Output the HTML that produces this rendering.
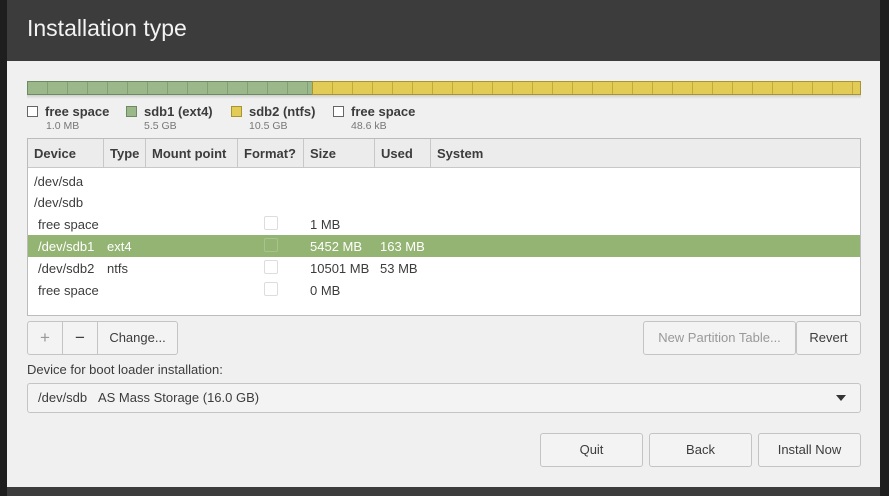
<!DOCTYPE html>
<html><head><style>
*{margin:0;padding:0;box-sizing:border-box}
body{width:889px;height:496px;background:#1e1e1e;position:relative;overflow:hidden;font-family:"Liberation Sans","DejaVu Sans",sans-serif;font-size:13px;color:#3c3c3c}
.a{position:absolute}
#win{left:7px;top:0;width:873px;height:496px;background:#f0f0f0}
#hdr{left:7px;top:0;width:873px;height:61px;background:#3c3c3c;color:#f3f3f3;font-size:23px;padding:15px 0 0 20px}
#bot{left:7px;top:487px;width:873px;height:9px;background:#3c3c3c}
.bar{top:81px;height:14px;border:1px solid #888}
.g{left:27px;width:286px;background:repeating-linear-gradient(90deg,#9ab88a 0 19px,#839f74 19px 20px);border-color:#6f8a62}
.y{left:312px;width:549px;background:repeating-linear-gradient(90deg,#e2cb56 0 19px,#c3ab3a 19px 20px);border-color:#a99530}
.sh{top:95px;height:4px;left:27px;width:834px;background:linear-gradient(#cfcfcf,#f0f0f0)}
.lg{top:104px;font-weight:bold;font-size:13px}
.sw{width:11px;height:11px;border:1px solid #666;display:inline-block;vertical-align:-1px;margin-right:7px}
.sub{top:120px;font-size:10.5px;color:#777}
#tbl{left:27px;top:138px;width:834px;height:178px;background:#fff;border:1px solid #bbb}
#th{left:0;top:0;width:832px;height:29px;background:#ececec;border-bottom:1px solid #c8c8c8}
.c{top:0;height:28px;border-right:1px solid #c8c8c8;font-weight:bold;padding:7px 0 0 6px}
.r{left:0;width:832px;height:22px;padding-top:4px}
.sel{background:#94b473;color:#fff}
.cb{width:14px;height:14px;border:1px solid #ddd;border-radius:2px;background:#fff}
.btn{height:34px;border:1px solid #c4c4c4;border-radius:3px;background:#f3f3f3;text-align:center;line-height:32px}
</style></head><body>
<div id="win" class="a"></div>
<div id="hdr" class="a">Installation type</div>
<div id="bot" class="a"></div>
<div class="a bar g"></div><div class="a bar y"></div><div class="a sh"></div>
<div class="a lg" style="left:27px"><span class="sw" style="background:#fff"></span>free space</div>
<div class="a lg" style="left:126px"><span class="sw" style="background:#9ab88a;border-color:#6f8a62"></span>sdb1 (ext4)</div>
<div class="a lg" style="left:231px"><span class="sw" style="background:#e2cb56;border-color:#a99530"></span>sdb2 (ntfs)</div>
<div class="a lg" style="left:333px"><span class="sw" style="background:#fff"></span>free space</div>
<div class="a sub" style="left:46px">1.0 MB</div>
<div class="a sub" style="left:144px">5.5 GB</div>
<div class="a sub" style="left:249px">10.5 GB</div>
<div class="a sub" style="left:351px">48.6 kB</div>
<div id="tbl" class="a">
<div id="th" class="a">
<div class="a c" style="left:0;width:76px">Device</div>
<div class="a c" style="left:76px;width:42px">Type</div>
<div class="a c" style="left:118px;width:92px">Mount point</div>
<div class="a c" style="left:210px;width:66px">Format?</div>
<div class="a c" style="left:276px;width:71px">Size</div>
<div class="a c" style="left:347px;width:56px">Used</div>
<div class="a c" style="left:403px;width:429px;border:0">System</div>
</div>
<div class="a r" style="top:31px"><span class="a" style="left:6px">/dev/sda</span></div>
<div class="a r" style="top:52px"><span class="a" style="left:6px">/dev/sdb</span></div>
<div class="a r" style="top:74px"><span class="a" style="left:10px">free space</span><span class="a cb" style="left:236px;top:3px"></span><span class="a" style="left:282px">1 MB</span></div>
<div class="a r sel" style="top:96px"><span class="a" style="left:10px">/dev/sdb1</span><span class="a" style="left:79px">ext4</span><span class="a cb" style="left:236px;top:3px;background:#94b473;border-color:#a9c28d"></span><span class="a" style="left:282px">5452 MB</span><span class="a" style="left:352px">163 MB</span></div>
<div class="a r" style="top:118px"><span class="a" style="left:10px">/dev/sdb2</span><span class="a" style="left:79px">ntfs</span><span class="a cb" style="left:236px;top:3px"></span><span class="a" style="left:282px">10501 MB</span><span class="a" style="left:352px">53 MB</span></div>
<div class="a r" style="top:140px"><span class="a" style="left:10px">free space</span><span class="a cb" style="left:236px;top:3px"></span><span class="a" style="left:282px">0 MB</span></div>
</div>
<div class="a btn" style="left:27px;top:321px;width:36px;color:#999;border-radius:3px 0 0 3px;font-size:17px">+</div>
<div class="a btn" style="left:62px;top:321px;width:36px;border-radius:0;font-size:17px">−</div>
<div class="a btn" style="left:97px;top:321px;width:81px;border-radius:0 3px 3px 0">Change...</div>
<div class="a btn" style="left:643px;top:321px;width:153px;color:#999">New Partition Table...</div>
<div class="a btn" style="left:796px;top:321px;width:65px">Revert</div>
<div class="a" style="left:27px;top:362px">Device for boot loader installation:</div>
<div class="a btn" style="left:27px;top:383px;width:834px;height:30px;line-height:28px;text-align:left;padding-left:10px">/dev/sdb&nbsp;&nbsp;&nbsp;AS Mass Storage (16.0 GB)<span class="a" style="right:14px;top:11px;width:0;height:0;border-left:5px solid transparent;border-right:5px solid transparent;border-top:6px solid #333"></span></div>
<div class="a btn" style="left:540px;top:433px;width:103px">Quit</div>
<div class="a btn" style="left:649px;top:433px;width:103px">Back</div>
<div class="a btn" style="left:758px;top:433px;width:103px">Install Now</div>
</body></html>
